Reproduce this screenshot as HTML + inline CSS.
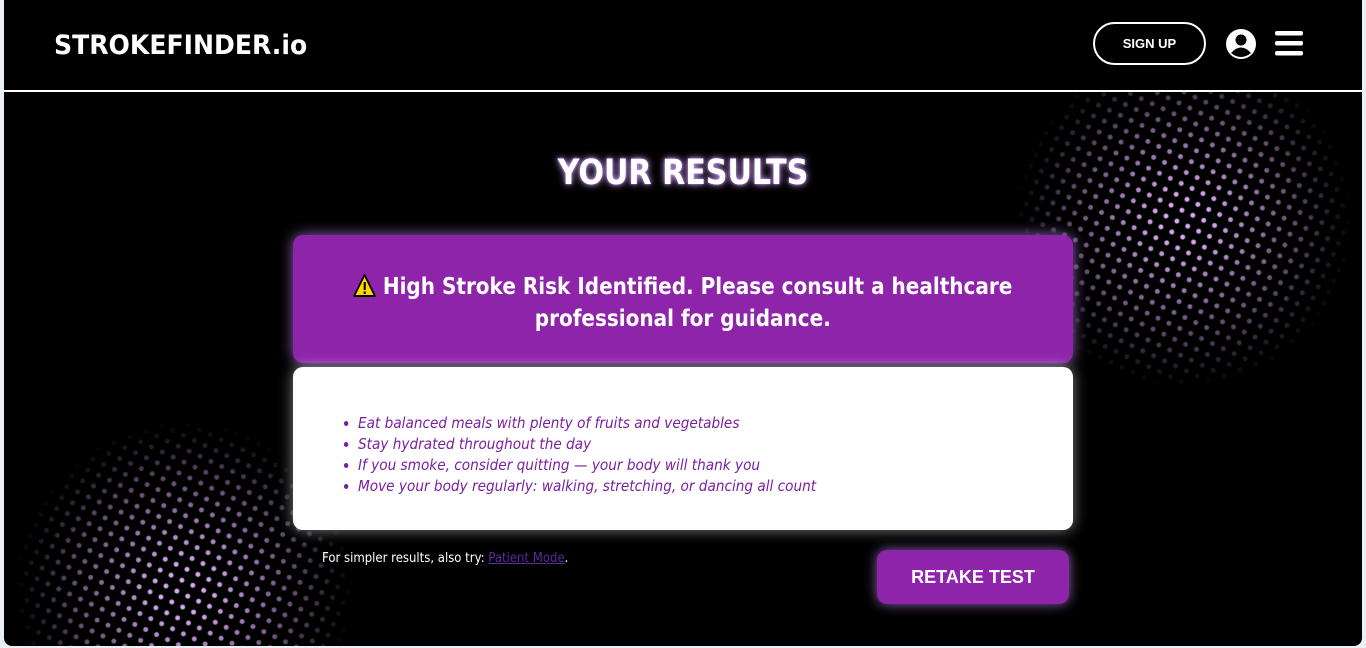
<!DOCTYPE html>
<html><head><meta charset="utf-8"><style>
*{margin:0;padding:0;box-sizing:border-box}
html,body{width:1366px;height:648px;background:#eceff1;overflow:hidden;font-family:"Liberation Sans",sans-serif}
.wrap{position:absolute;left:4px;top:0;width:1358px;height:646px;background:#000;border-radius:0 0 8px 8px;overflow:hidden}
.hdr{position:absolute;left:0;top:0;width:100%;height:92px;border-bottom:2px solid #fff;background:#000;z-index:2}
.logo{position:absolute;left:50px;top:30px;color:#fff;font-weight:bold;font-size:27px;font-family:"DejaVu Sans","Liberation Sans",sans-serif;transform:scaleX(0.93);transform-origin:left}
.sign{position:absolute;left:1089px;top:22px;width:113px;height:43px;border:2px solid #fff;border-radius:22px;color:#fff;font-size:13px;font-weight:bold;text-align:center;line-height:39px}
.dots{position:absolute;border-radius:50%;background-image:radial-gradient(circle,#e0b8f5 0,#c99ae4 2px,transparent 3px);background-size:12px 12px;transform:rotate(25deg)}
h1{position:absolute;left:0;width:100%;top:153px;text-align:center;color:#fff;font-size:35px;font-family:"DejaVu Sans",sans-serif;font-weight:bold;text-shadow:0 0 8px #d7a9ff,0 0 3px #b070ff;transform:scaleX(0.86)}
.alert{position:absolute;left:289px;top:235px;width:780px;height:128px;background:#8e24aa;border-radius:10px;box-shadow:0 0 14px rgba(200,140,255,.7);color:#fff;font-weight:bold;font-size:23px;text-align:center;padding-top:36px;line-height:32px;font-family:"DejaVu Sans",sans-serif}
.alert span{display:inline-block;transform:scaleX(0.87)}
.card{position:absolute;left:289px;top:367px;width:780px;height:163px;background:#fff;border-radius:10px;box-shadow:0 0 14px rgba(255,255,255,.5)}
.card ul{position:absolute;left:65px;top:46px;color:#7b1fa2;font-style:italic;font-size:15.5px;line-height:21px;font-family:"DejaVu Sans",sans-serif}
.card li{transform:scaleX(0.88);transform-origin:left}
.note{position:absolute;left:318px;top:551px;color:#fff;font-size:13px;font-family:"DejaVu Sans",sans-serif;transform:scaleX(0.9);transform-origin:left}
.note a{color:#5e2a9e}
.btn{position:absolute;left:873px;top:550px;width:192px;height:54px;background:#8e24aa;border-radius:10px;box-shadow:0 0 12px rgba(200,140,255,.7);color:#fff;font-weight:bold;font-size:18px;text-align:center;line-height:54px}
.m{-webkit-mask-image:radial-gradient(circle,#000 10%,rgba(0,0,0,.45) 45%,transparent 68%);mask-image:radial-gradient(circle,#000 10%,rgba(0,0,0,.45) 45%,transparent 68%)}
</style></head><body>
<div class="wrap">
<div class="dots m" style="left:1000px;top:50px;width:360px;height:340px"></div>
<div class="dots m" style="left:0px;top:420px;width:360px;height:340px"></div>
<div class="hdr">
<div class="logo">STROKEFINDER.io</div>
<div class="sign">SIGN UP</div>
<svg style="position:absolute;left:1221px;top:28px" width="32" height="32" viewBox="0 0 32 32"><circle cx="16" cy="16" r="15" fill="#fff"/><circle cx="16" cy="12" r="5.5" fill="#000"/><path d="M6 25 Q16 14 26 25 Q16 33 6 25Z" fill="#000"/></svg>
<svg style="position:absolute;left:1271px;top:31px" width="28" height="25"><rect x="0" y="0" width="28" height="4.5" rx="2" fill="#fff"/><rect x="0" y="10" width="28" height="4.5" rx="2" fill="#fff"/><rect x="0" y="20" width="28" height="4.5" rx="2" fill="#fff"/></svg>
</div>
<h1>YOUR RESULTS</h1>
<div class="alert"><span><svg width="26" height="24" viewBox="0 0 26 24" style="vertical-align:-3px;margin-right:8px"><path d="M13 2 L25 23 L1 23Z" fill="#ffd600" stroke="#000" stroke-width="2" stroke-linejoin="round"/><rect x="12" y="9" width="2.4" height="8" fill="#000"/><rect x="12" y="18.5" width="2.4" height="2.4" fill="#000"/></svg>High Stroke Risk Identified. Please consult a healthcare<br>professional for guidance.</span></div>
<div class="card"><ul>
<li>Eat balanced meals with plenty of fruits and vegetables</li>
<li>Stay hydrated throughout the day</li>
<li>If you smoke, consider quitting — your body will thank you</li>
<li>Move your body regularly: walking, stretching, or dancing all count</li>
</ul></div>
<div class="note">For simpler results, also try: <a href="#">Patient Mode</a>.</div>
<div class="btn">RETAKE TEST</div>
</div>
</body></html>
